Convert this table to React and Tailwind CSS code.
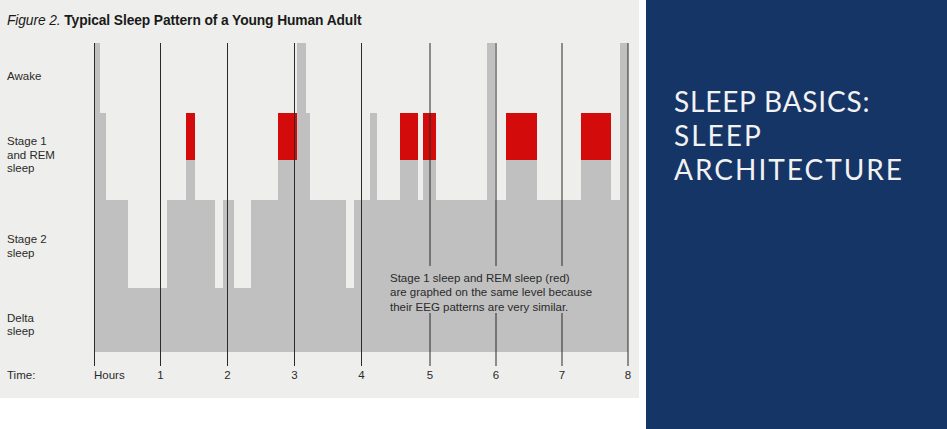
import React from 'react';

// hypnogram steps: [x0, x1, top of gray]
const steps = [
  [95, 100, 43], [100, 106, 113], [106, 128, 200], [128, 167, 288], [167, 186, 200],
  [186, 195, 160], [195, 215, 200], [215, 223, 288], [223, 234, 200], [234, 251, 288],
  [251, 278, 200], [278, 297, 160], [297, 306, 43], [306, 310, 113], [310, 346, 200],
  [346, 354, 288], [354, 370, 200], [370, 377, 113], [377, 400, 200], [400, 418, 160],
  [418, 423, 200], [423, 436, 160], [436, 487, 200], [487, 495, 43], [495, 506, 200],
  [506, 537, 160], [537, 581, 200], [581, 611, 160], [611, 620, 200], [620, 628, 43],
];

const rem = [[186, 195], [278, 297], [400, 418], [423, 436], [506, 537], [581, 611]];

const hours = [
  { x: 94.5, label: 'Hours' }, { x: 160.5, label: '1' }, { x: 227.5, label: '2' },
  { x: 294.5, label: '3' }, { x: 361.5, label: '4' }, { x: 430, label: '5', gap: true },
  { x: 496, label: '6', gap: true }, { x: 562, label: '7', gap: true }, { x: 628, label: '8' },
];

const stageLabels = [
  { y: 80, text: 'Awake' },
  { y: 145, text: 'Stage 1' }, { y: 158.5, text: 'and REM' }, { y: 172, text: 'sleep' },
  { y: 243, text: 'Stage 2' }, { y: 257, text: 'sleep' },
  { y: 321.5, text: 'Delta' }, { y: 335, text: 'sleep' },
  { y: 379, text: 'Time:' },
];

const grayPath = () => {
  let d = 'M 95 352';
  steps.forEach(([x0, x1, top]) => {
    d += ` L ${x0} ${top} L ${x1} ${top}`;
  });
  return d + ' L 628 352 Z';
};

function SleepChart() {
  return (
    <svg width="639" height="363" viewBox="0 35 639 363" className="block">
      <path d={grayPath()} fill="#c0c0c0" />
      {rem.map(([x0, x1]) => (
        <rect key={x0} x={x0} y={113} width={x1 - x0} height={47} fill="#d30b0b" />
      ))}
      {hours.map((h) =>
        h.gap ? (
          <g key={h.label} stroke="#2b2b2b" strokeWidth="1">
            <line x1={h.x} y1={43} x2={h.x} y2={266} />
            <line x1={h.x} y1={313} x2={h.x} y2={366} />
          </g>
        ) : (
          <line key={h.label} x1={h.x} y1={43} x2={h.x} y2={366} stroke="#2b2b2b" strokeWidth="1" />
        )
      )}
      <g fill="#2a2a2a" fontSize="11.5">
        {stageLabels.map((l, i) => (
          <text key={i} x={7} y={l.y}>{l.text}</text>
        ))}
        {hours.map((h) => (
          <text key={h.label} x={h.label === 'Hours' ? 94 : h.x} y={379} textAnchor={h.label === 'Hours' ? 'start' : 'middle'}>
            {h.label}
          </text>
        ))}
        <text x={390} y={281.5}>Stage 1 sleep and REM sleep (red)</text>
        <text x={390} y={296}>are graphed on the same level because</text>
        <text x={390} y={310.5}>their EEG patterns are very similar.</text>
      </g>
    </svg>
  );
}

export default function App() {
  return (
    <div className="flex h-[429px] w-[947px] overflow-hidden bg-white">
      <div className="w-[646px] shrink-0">
        <div className="flex h-[398px] w-[639px] flex-col bg-[#eeefec] font-['Liberation_Sans',Arial,sans-serif] text-[#1a1a1a]">
          <div className="h-[35px] pl-[7px] pt-[13px] text-[13.8px] leading-[16px] tracking-[-0.1px]">
            <span className="italic">Figure 2.</span>{' '}
            <span className="font-bold">Typical Sleep Pattern of a Young Human Adult</span>
          </div>
          <SleepChart />
        </div>
      </div>
      <div className="flex-1 bg-[#163567] pl-[28px] pt-[84px] font-['Lato','Open_Sans',sans-serif] text-[28px] leading-[34px] tracking-[2px] text-[#f2f2f2]">
        <div className="tracking-[0.8px]">SLEEP BASICS:</div>
        <div>SLEEP</div>
        <div>ARCHITECTURE</div>
      </div>
    </div>
  );
}
